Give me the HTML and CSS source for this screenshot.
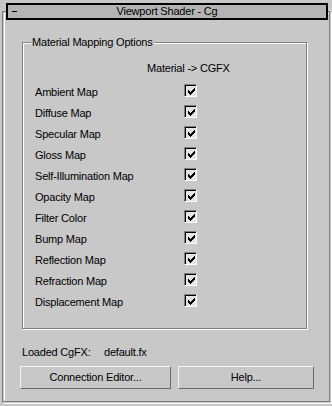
FILE: index.html
```html
<!DOCTYPE html>
<html>
<head>
<meta charset="utf-8">
<link rel="stylesheet" href="styles.css">
</head>
<body>
<div class="frame">
  <div class="title">
    <span class="minus"></span>
    <span class="title-text">Viewport Shader - Cg</span>
    <span></span>
  </div>
  <div class="content">
    <div class="group">
      <span class="group-label">Material Mapping Options</span>
      <div class="col-head">Material -&gt; CGFX</div>
      <div class="rows">
        <div class="row"><span class="lbl">Ambient Map</span><span class="cb"><svg width="7" height="7" viewBox="0 0 7 7"><path d="M0 2h1v3H0zM1 3h1v3H1zM2 4h1v3H2zM3 3h1v3H3zM4 2h1v3H4zM5 1h1v3H5zM6 0h1v3H6z"/></svg></span></div>
        <div class="row"><span class="lbl">Diffuse Map</span><span class="cb"><svg width="7" height="7" viewBox="0 0 7 7"><path d="M0 2h1v3H0zM1 3h1v3H1zM2 4h1v3H2zM3 3h1v3H3zM4 2h1v3H4zM5 1h1v3H5zM6 0h1v3H6z"/></svg></span></div>
        <div class="row"><span class="lbl">Specular Map</span><span class="cb"><svg width="7" height="7" viewBox="0 0 7 7"><path d="M0 2h1v3H0zM1 3h1v3H1zM2 4h1v3H2zM3 3h1v3H3zM4 2h1v3H4zM5 1h1v3H5zM6 0h1v3H6z"/></svg></span></div>
        <div class="row"><span class="lbl">Gloss Map</span><span class="cb"><svg width="7" height="7" viewBox="0 0 7 7"><path d="M0 2h1v3H0zM1 3h1v3H1zM2 4h1v3H2zM3 3h1v3H3zM4 2h1v3H4zM5 1h1v3H5zM6 0h1v3H6z"/></svg></span></div>
        <div class="row"><span class="lbl">Self-Illumination Map</span><span class="cb"><svg width="7" height="7" viewBox="0 0 7 7"><path d="M0 2h1v3H0zM1 3h1v3H1zM2 4h1v3H2zM3 3h1v3H3zM4 2h1v3H4zM5 1h1v3H5zM6 0h1v3H6z"/></svg></span></div>
        <div class="row"><span class="lbl">Opacity Map</span><span class="cb"><svg width="7" height="7" viewBox="0 0 7 7"><path d="M0 2h1v3H0zM1 3h1v3H1zM2 4h1v3H2zM3 3h1v3H3zM4 2h1v3H4zM5 1h1v3H5zM6 0h1v3H6z"/></svg></span></div>
        <div class="row"><span class="lbl">Filter Color</span><span class="cb"><svg width="7" height="7" viewBox="0 0 7 7"><path d="M0 2h1v3H0zM1 3h1v3H1zM2 4h1v3H2zM3 3h1v3H3zM4 2h1v3H4zM5 1h1v3H5zM6 0h1v3H6z"/></svg></span></div>
        <div class="row"><span class="lbl">Bump Map</span><span class="cb"><svg width="7" height="7" viewBox="0 0 7 7"><path d="M0 2h1v3H0zM1 3h1v3H1zM2 4h1v3H2zM3 3h1v3H3zM4 2h1v3H4zM5 1h1v3H5zM6 0h1v3H6z"/></svg></span></div>
        <div class="row"><span class="lbl">Reflection Map</span><span class="cb"><svg width="7" height="7" viewBox="0 0 7 7"><path d="M0 2h1v3H0zM1 3h1v3H1zM2 4h1v3H2zM3 3h1v3H3zM4 2h1v3H4zM5 1h1v3H5zM6 0h1v3H6z"/></svg></span></div>
        <div class="row"><span class="lbl">Refraction Map</span><span class="cb"><svg width="7" height="7" viewBox="0 0 7 7"><path d="M0 2h1v3H0zM1 3h1v3H1zM2 4h1v3H2zM3 3h1v3H3zM4 2h1v3H4zM5 1h1v3H5zM6 0h1v3H6z"/></svg></span></div>
        <div class="row"><span class="lbl">Displacement Map</span><span class="cb"><svg width="7" height="7" viewBox="0 0 7 7"><path d="M0 2h1v3H0zM1 3h1v3H1zM2 4h1v3H2zM3 3h1v3H3zM4 2h1v3H4zM5 1h1v3H5zM6 0h1v3H6z"/></svg></span></div>
      </div>
    </div>
    <div class="loaded"><span class="loaded-key">Loaded CgFX:</span><span>default.fx</span></div>
    <div class="buttons">
      <div class="btn btn-wide">Connection Editor...</div>
      <div class="btn btn-help">Help...</div>
    </div>
  </div>
</div>
</body>
</html>
```
FILE: styles.css
```css
html, body {
  margin: 0;
  padding: 0;
}
body {
  width: 332px;
  height: 406px;
  overflow: hidden;
  background: #c8c8c8;
  color: #000;
  font-family: "Liberation Sans", Arial, sans-serif;
  font-size: 11px;
  line-height: 13px;
  letter-spacing: -0.2px;
}
.frame {
  box-sizing: border-box;
  margin: 11px 0 0 2px;
  width: 328px;
  height: 391px;
  border: 1px solid #7c7c7c;
  box-shadow: inset 1px 1px 0 #c8c8c8, inset 2px 2px 0 #fff, 1px 1px 0 #c8c8c8, 2px 2px 0 #fff;
}
.title {
  box-sizing: border-box;
  margin: -9px 1px 0 3px;
  height: 17px;
  border: 2px solid #000;
  background: #b4b4b4;
  display: grid;
  grid-template-columns: 1fr auto 1fr;
  align-items: center;
}
.minus {
  justify-self: start;
  margin-left: 4px;
  margin-top: -1px;
  width: 5px;
  height: 1px;
  background: #000;
}
.title-text {
  line-height: 13px;
}
.content {
  padding: 22px 0 0 17px;
}
.group {
  position: relative;
  box-sizing: border-box;
  margin-left: 2px;
  width: 285px;
  height: 287px;
  border: 1px solid #808080;
  box-shadow: inset 1px 1px 0 #fff, 1px 1px 0 #fff;
  padding: 19px 0 0 12px;
}
.group-label {
  position: absolute;
  top: -7px;
  left: 8px;
  padding: 0 1px;
  background: #c8c8c8;
}
.col-head {
  margin-left: 112px;
  height: 13px;
}
.rows {
  margin-top: 9px;
  display: flex;
  flex-direction: column;
}
.row {
  display: grid;
  grid-template-columns: 149px 13px;
  height: 21px;
  align-items: start;
}
.lbl {
  padding-top: 2px;
  white-space: nowrap;
}
.cb {
  box-sizing: border-box;
  width: 13px;
  height: 13px;
  border: 1px solid;
  border-color: #808080 #fff #fff #808080;
  background: #e4e4e4;
  box-shadow: inset 1px 1px 0 #000;
  display: flex;
  align-items: center;
  justify-content: center;
  padding: 1px 0 0 1px;
}
.cb svg {
  display: block;
}
.loaded {
  margin: 17px 0 0 2px;
  display: flex;
}
.loaded-key {
  width: 82px;
}
.buttons {
  margin-top: 7px;
  display: flex;
  gap: 7px;
}
.btn {
  box-sizing: border-box;
  height: 23px;
  border: 1px solid;
  border-color: #f4f4f4 #6a6a6a #6a6a6a #f4f4f4;
  display: flex;
  align-items: center;
  justify-content: center;
}
.btn-wide {
  width: 151px;
}
.btn-help {
  width: 136px;
}
```
